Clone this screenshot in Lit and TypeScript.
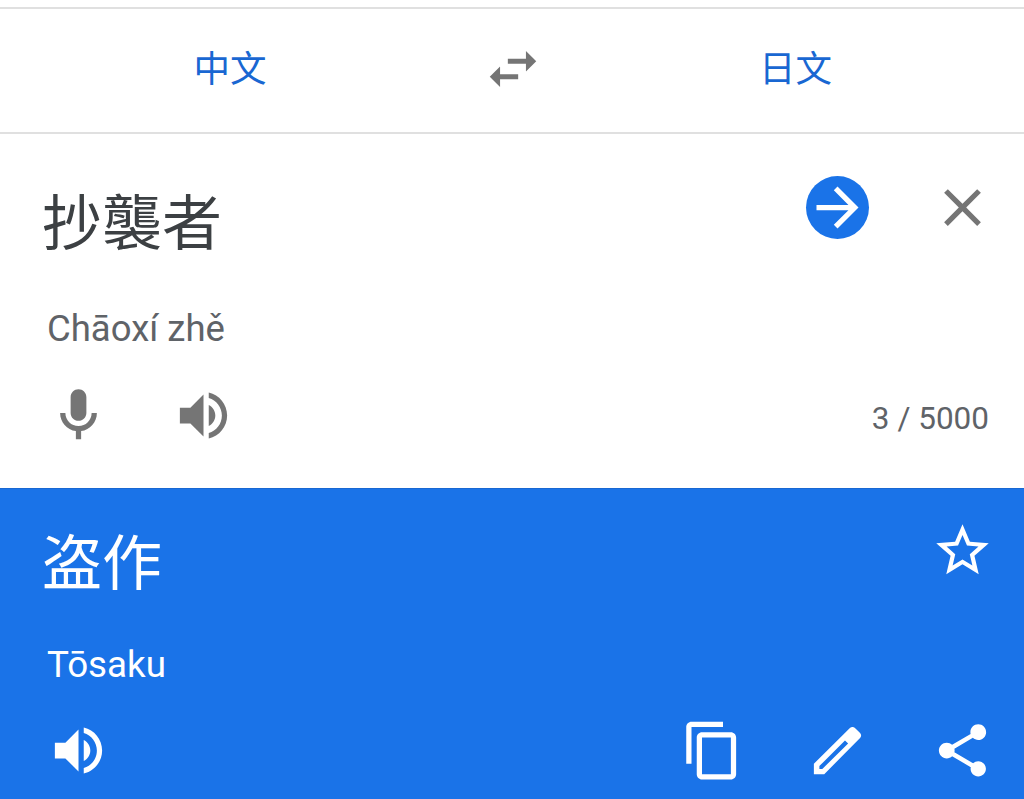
import { css, html, LitElement, svg } from "lit";
import { customElement, property } from "lit/decorators.js";

const icons: Record<string, string> = {
  swap: 'M6.99 11L3 15l3.99 4v-3H14v-2H6.99v-3zM21 9l-3.99-4v3H10v2h7.01v3L21 9z',
  forward: 'M12 4l-1.41 1.41L16.17 11H4v2h12.17l-5.58 5.59L12 20l8-8z',
  close: 'M19 6.41L17.59 5 12 10.59 6.41 5 5 6.41 10.59 12 5 17.59 6.41 19 12 13.41 17.59 19 19 17.59 13.41 12z',
  mic: 'M12 14c1.66 0 3-1.34 3-3V5c0-1.66-1.34-3-3-3S9 3.34 9 5v6c0 1.66 1.34 3 3 3zM17 11c0 2.76-2.24 5-5 5s-5-2.24-5-5H5c0 3.53 2.61 6.43 6 6.92V21h2v-3.08c3.39-.49 6-3.39 6-6.92h-2z',
  volume: 'M3 9v6h4l5 5V4L7 9H3zm13.5 3c0-1.77-1.02-3.29-2.5-4.03v8.05c1.48-.73 2.5-2.25 2.5-4.02zM14 3.23v2.06c2.89.86 5 3.54 5 6.71s-2.11 5.85-5 6.71v2.06c4.01-.91 7-4.49 7-8.77s-2.99-7.86-7-8.77z',
  star: 'M22 9.24l-7.19-.62L12 2 9.19 8.63 2 9.24l5.46 4.73L5.82 21 12 17.27 18.18 21l-1.63-7.03L22 9.24zM12 15.4l-3.76 2.27 1-4.28-3.32-2.88 4.38-.38L12 6.1l1.71 4.04 4.38.38-3.32 2.88 1 4.28L12 15.4z',
  copy: 'M16 1H4c-1.1 0-2 .9-2 2v14h2V3h12V1zm3 4H8c-1.1 0-2 .9-2 2v14c0 1.1.9 2 2 2h11c1.1 0 2-.9 2-2V7c0-1.1-.9-2-2-2zm0 16H8V7h11v14z',
  edit: 'M17.7 3c-.35 0-.7.12-.97.4L3 17.05V21h3.95L20.6 7.27c.53-.53.53-1.4 0-1.93L18.66 3.4c-.27-.28-.6-.4-.96-.4zM14.85 8.15l1.2 1.15L6.2 19.05H5.1v-1.1L14.85 8.15z',
  share: 'M18 16.08c-.76 0-1.44.3-1.96.77L8.91 12.7c.05-.23.09-.46.09-.7s-.04-.47-.09-.7l7.05-4.11c.54.5 1.25.81 2.04.81 1.66 0 3-1.34 3-3s-1.34-3-3-3-3 1.34-3 3c0 .24.04.47.09.7L8.04 9.81C7.5 9.31 6.79 9 6 9c-1.66 0-3 1.34-3 3s1.34 3 3 3c.79 0 1.5-.31 2.04-.81l7.12 4.16c-.05.21-.08.43-.08.65 0 1.61 1.31 2.92 2.92 2.92s2.92-1.31 2.92-2.92-1.31-2.92-2.92-2.92z',
};

@customElement('app-icon')
export class AppIcon extends LitElement {
  @property() name = '';

  static styles = css`
    :host {
      display: block;
      flex: none;
      width: 63px;
      height: 63px;
    }

    .glyph {
      display: block;
      width: 100%;
      height: 100%;
      fill: currentColor;
      fill-rule: evenodd;
    }
  `;

  protected render() {
    return html`
      <svg class="glyph" viewBox="0 0 24 24">
        ${svg`<path d=${icons[this.name] || ''}></path>`}
      </svg>
    `;
  }
}

@customElement('app-root')
export class AppRoot extends LitElement {
  static styles = css`
    :host {
      display: flex;
      flex-direction: column;
      box-sizing: border-box;
      height: 799px;
      padding-top: 7px;
      overflow: hidden;
      background: #fff;
      font-family: Roboto, "Noto Sans CJK TC", sans-serif;
    }

    .languages {
      display: grid;
      grid-template-columns: 460px 106px 459px;
      align-items: center;
      box-sizing: border-box;
      height: 127px;
      padding-bottom: 4px;
      border-top: 2px solid #e0e0e0;
      border-bottom: 2px solid #e0e0e0;
      color: #1967d2;
      font-size: 36.5px;
      text-align: center;
    }

    .language {
      padding-bottom: 5px;
    }

    .swap {
      justify-self: center;
      width: 62px;
      height: 62px;
      color: #757575;
    }

    .panel {
      display: flex;
      flex-direction: column;
      box-sizing: border-box;
      padding: 0 30px 0 47px;
    }

    .source {
      height: 354px;
      padding-top: 42px;
      color: #5f6368;
    }

    .result {
      flex: 1;
      padding-top: 30px;
      border-top: 1px solid #1967d2;
      background: #1a73e8;
      color: #fff;
    }

    .row {
      display: flex;
      justify-content: space-between;
    }

    .tools {
      display: flex;
      gap: 62px;
      color: #757575;
    }

    .result .tools {
      color: #fff;
    }

    .phrase {
      height: 88px;
      margin: 5px 0 0 -5px;
      color: #3c4043;
      font-size: 60px;
      line-height: 88px;
    }

    .result .phrase {
      margin-top: 2px;
      color: #fff;
    }

    .reading {
      margin: 38px 0 33px;
      font-size: 36.5px;
      line-height: 44px;
    }

    .result .reading {
      margin: 34px 0 32px;
      font-size: 36.75px;
    }

    .go {
      border-radius: 50%;
      background: #1a73e8;
      color: #fff;
    }

    .count {
      margin-right: 5px;
      font-size: 31.5px;
      line-height: 70px;
    }
  `;

  protected render() {
    return html`
      <div class="languages">
        <span class="language">中文</span>
        <app-icon class="swap" name="swap"></app-icon>
        <span class="language">日文</span>
      </div>
      <div class="panel source">
        <div class="row">
          <div class="phrase">抄襲者</div>
          <div class="tools">
            <app-icon class="go" name="forward"></app-icon>
            <app-icon name="close"></app-icon>
          </div>
        </div>
        <div class="reading">Chāoxí zhě</div>
        <div class="row">
          <div class="tools">
            <app-icon name="mic"></app-icon>
            <app-icon name="volume"></app-icon>
          </div>
          <div class="count">3 / 5000</div>
        </div>
      </div>
      <div class="panel result">
        <div class="row">
          <div class="phrase" lang="ja">盗作</div>
          <div class="tools">
            <app-icon name="star"></app-icon>
          </div>
        </div>
        <div class="reading">Tōsaku</div>
        <div class="row">
          <div class="tools">
            <app-icon name="volume"></app-icon>
          </div>
          <div class="tools">
            <app-icon name="copy"></app-icon>
            <app-icon name="edit"></app-icon>
            <app-icon name="share"></app-icon>
          </div>
        </div>
      </div>
    `;
  }
}
